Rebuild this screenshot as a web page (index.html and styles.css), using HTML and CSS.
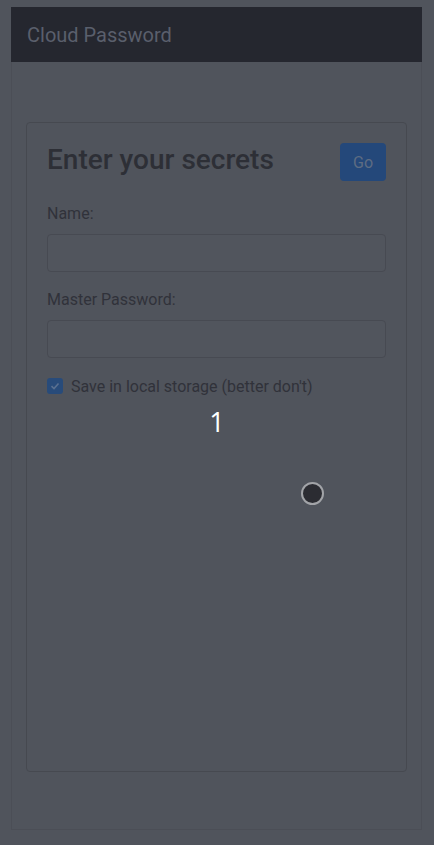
FILE: index.html
```html
<!DOCTYPE html>
<html>
<head>
<meta charset="utf-8">
<link rel="stylesheet" href="styles.css">
</head>
<body>
<div class="app">
  <header class="navbar">Cloud Password</header>
  <main class="card">
    <div class="card-head">
      <h3 class="title">Enter your secrets</h3>
      <button class="btn">Go</button>
    </div>
    <div class="group">
      <label class="label">Name:</label>
      <div class="input"></div>
    </div>
    <div class="group">
      <label class="label">Master Password:</label>
      <div class="input"></div>
    </div>
    <div class="check">
      <span class="box"><svg width="10" height="10" viewBox="0 0 10 10"><path d="M1.5 5.2 L4 7.5 L8.5 2.5" fill="none" stroke="#5a7090" stroke-width="1.6"/></svg></span>
      <span class="check-text">Save in local storage (better don't)</span>
    </div>
  </main>
</div>
<div class="count">1</div>
<div class="dot"></div>
</body>
</html>
```
FILE: styles.css
```css
html, body {
  margin: 0;
  padding: 0;
  background: #50545c;
  font-family: Roboto, "Liberation Sans", sans-serif;
}
.app {
  margin: 7px 11px 0 11px;
  width: 411px;
  height: 823px;
  border: 1px solid #4b4e56;
  border-top: none;
  box-sizing: border-box;
  display: flex;
  flex-direction: column;
}
.navbar {
  height: 55px;
  background: #25272f;
  color: #5a5f6c;
  font-size: 20px;
  display: flex;
  align-items: center;
  padding-left: 16px;
  margin: 0 -1px;
}
.card {
  margin: 60px 14px 0 14px;
  height: 650px;
  border: 1px solid #464950;
  border-radius: 4px;
  box-sizing: border-box;
  padding: 20px 20px;
}
.card-head {
  display: flex;
  justify-content: space-between;
  align-items: flex-start;
  margin-bottom: 21px;
}
.title {
  margin: 0;
  font-size: 28px;
  font-weight: 500;
  line-height: 1.2;
  color: #2d2f36;
}
.btn {
  width: 46px;
  height: 38px;
  margin-top: 0;
  border: none;
  border-radius: 4px;
  background: #24487a;
  color: #5e6c82;
  font-family: Roboto, "Liberation Sans", sans-serif;
  font-size: 16px;
  padding: 0;
}
.group {
  margin-bottom: 16px;
}
.label {
  display: block;
  font-size: 16px;
  line-height: 24px;
  color: #30323a;
  margin-bottom: 8px;
}
.input {
  height: 38px;
  border: 1px solid #474a52;
  border-radius: 4px;
  box-sizing: border-box;
  background: #51555d;
}
.check {
  display: flex;
  align-items: center;
  gap: 8px;
  height: 24px;
}
.box {
  width: 16px;
  height: 16px;
  border-radius: 3px;
  background: #284b7a;
  display: flex;
  align-items: center;
  justify-content: center;
}
.check-text {
  font-size: 16px;
  color: #30323a;
}
.count {
  position: absolute;
  left: 207px;
  top: 404px;
  width: 20px;
  text-align: center;
  color: #ffffff;
  font-size: 27px;
  font-family: "Open Sans", Roboto, sans-serif;
  line-height: 36px;
}
.dot {
  position: absolute;
  left: 301px;
  top: 482px;
  width: 23px;
  height: 23px;
  box-sizing: border-box;
  border-radius: 50%;
  background: #2b2c32;
  border: 2px solid #a2a4a8;
}
```
